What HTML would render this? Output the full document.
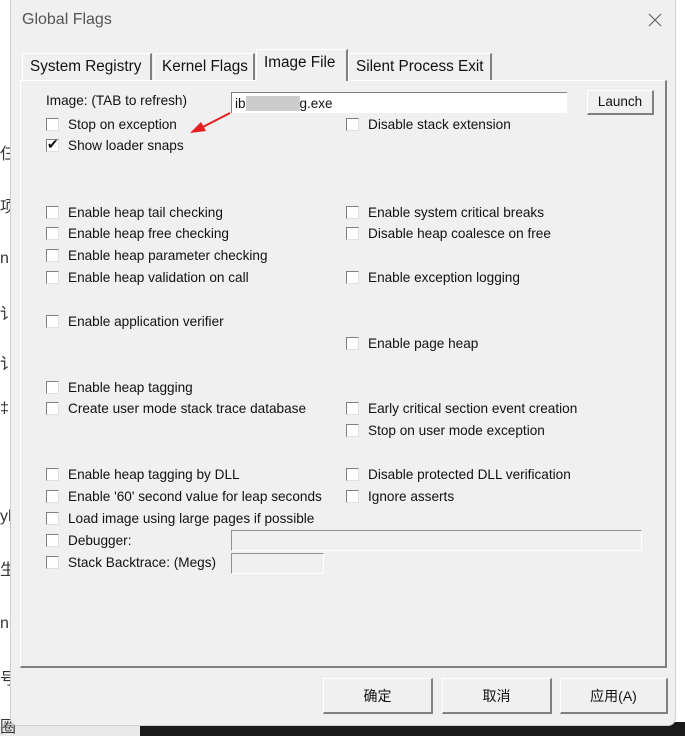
<!DOCTYPE html>
<html><head><meta charset="utf-8"><style>
*{box-sizing:border-box}
body{margin:0;width:685px;height:736px;position:relative;overflow:hidden;background:#fff;font-family:"Liberation Sans","Noto Sans CJK SC",sans-serif;font-size:13.5px;color:#111}
.a{position:absolute}
.dlg{left:10px;top:-8px;width:666px;height:734px;background:#f0f0f0;border:1px solid #d0d0d0;border-radius:8px}
.cb{position:absolute;width:13px;height:13px;background:#fff;border-top:1px solid #808080;border-left:1px solid #808080;border-right:1px solid #e0e0e0;border-bottom:1px solid #e0e0e0}
.l{position:absolute;white-space:nowrap;font-size:13.6px}
.tab{position:absolute;top:53px;height:27px;border:1px solid #fff;border-right:2px solid #808080;border-bottom:none;font-size:15.3px;padding:4px 0 0 7px;white-space:nowrap;background:#f0f0f0}
.btn{position:absolute;top:678px;height:36px;border:1px solid #fff;border-right:2px solid #808080;border-bottom:2px solid #808080;background:#f0f0f0;text-align:center;line-height:34px;font-size:14px}
</style></head><body>
<div class="a" style="left:0;top:726px;width:140px;height:10px;background:#e8e8e8"></div>
<div class="a" style="left:140px;top:722px;width:545px;height:14px;background:#1a1a1a"></div>
<div class="a" style="left:140px;top:0;width:200px;height:2px;background:#333"></div>
<div class="a" style="left:0;top:140px;font-size:16px;color:#333">仨</div>
<div class="a" style="left:0;top:193px;font-size:16px;color:#333">项</div>
<div class="a" style="left:0;top:250px;font-size:16px;color:#333">n</div>
<div class="a" style="left:0;top:300px;font-size:16px;color:#333">讠</div>
<div class="a" style="left:0;top:350px;font-size:16px;color:#333">讠</div>
<div class="a" style="left:0;top:400px;font-size:16px;color:#333">‡</div>
<div class="a" style="left:0;top:508px;font-size:16px;color:#333">yl</div>
<div class="a" style="left:0;top:556px;font-size:16px;color:#333">生</div>
<div class="a" style="left:0;top:615px;font-size:16px;color:#333">nu</div>
<div class="a" style="left:0;top:665px;font-size:16px;color:#333">号</div>
<div class="a" style="left:0;top:713px;font-size:16px;color:#333">圈</div>
<div class="dlg a"></div>
<div class="a" style="left:22px;top:11px;font-size:16px;color:#555">Global Flags</div>
<svg class="a" style="left:648px;top:13px" width="14" height="14"><path d="M1 1L13 13M13 1L1 13" stroke="#666" stroke-width="1.2"/></svg>
<div class="a" style="left:20px;top:80px;width:647px;height:588px;border:1px solid #fff;border-right:2px solid #808080;border-bottom:2px solid #808080"></div>
<div class="tab" style="left:22px;width:130px">System Registry</div>
<div class="tab" style="left:154px;width:101px">Kernel Flags</div>
<div class="tab" style="left:256px;top:49px;height:32px;width:92px;border-bottom:none;z-index:2">Image File</div>
<div class="tab" style="left:348px;width:144px">Silent Process Exit</div>
<div class="l" style="left:46px;top:93px">Image: (TAB to refresh)</div>
<div class="a" style="left:231px;top:92px;width:336px;height:21px;background:#fff;border-top:1px solid #808080;border-left:1px solid #808080;padding:3px 0 0 3px;font-size:13.5px">ib<span style="background:#ccc;color:#ccc">xxxxxxxx</span>g.exe</div>
<div class="a" style="left:587px;top:90px;width:67px;height:25px;border:1px solid #fff;border-right:2px solid #808080;border-bottom:2px solid #808080;text-align:center;line-height:22px">Launch</div>
<svg class="a" style="left:185px;top:110px" width="50" height="25"><path d="M45 3 L14 19" stroke="#e62020" stroke-width="2"/><path d="M5 23 L16 12 L21 21Z" fill="#e62020"/></svg>
<div class="cb" style="left:46px;top:118px"></div><div class="l" style="left:68px;top:117px">Stop on exception</div>
<div class="cb" style="left:46px;top:139px"></div><div class="l" style="left:43px;top:136px;font-size:14px">&nbsp;✔</div><div class="l" style="left:68px;top:138px">Show loader snaps</div>
<div class="cb" style="left:346px;top:118px"></div><div class="l" style="left:368px;top:117px">Disable stack extension</div>

<div class="cb" style="left:46px;top:206px"></div><div class="l" style="left:68px;top:205px">Enable heap tail checking</div>
<div class="cb" style="left:46px;top:227px"></div><div class="l" style="left:68px;top:226px">Enable heap free checking</div>
<div class="cb" style="left:46px;top:249px"></div><div class="l" style="left:68px;top:248px">Enable heap parameter checking</div>
<div class="cb" style="left:46px;top:271px"></div><div class="l" style="left:68px;top:270px">Enable heap validation on call</div>
<div class="cb" style="left:46px;top:315px"></div><div class="l" style="left:68px;top:314px">Enable application verifier</div>
<div class="cb" style="left:46px;top:381px"></div><div class="l" style="left:68px;top:380px">Enable heap tagging</div>
<div class="cb" style="left:46px;top:402px"></div><div class="l" style="left:68px;top:401px">Create user mode stack trace database</div>
<div class="cb" style="left:46px;top:468px"></div><div class="l" style="left:68px;top:467px">Enable heap tagging by DLL</div>
<div class="cb" style="left:46px;top:490px"></div><div class="l" style="left:68px;top:489px">Enable '60' second value for leap seconds</div>
<div class="cb" style="left:46px;top:512px"></div><div class="l" style="left:68px;top:511px">Load image using large pages if possible</div>
<div class="cb" style="left:46px;top:534px"></div><div class="l" style="left:68px;top:533px">Debugger:</div>
<div class="cb" style="left:46px;top:556px"></div><div class="l" style="left:68px;top:555px">Stack Backtrace: (Megs)</div>
<div class="a" style="left:231px;top:530px;width:411px;height:21px;border-top:1px solid #909090;border-left:1px solid #909090;border-right:1px solid #fff;border-bottom:1px solid #fff"></div>
<div class="a" style="left:231px;top:553px;width:93px;height:21px;border-top:1px solid #909090;border-left:1px solid #909090;border-right:1px solid #fff;border-bottom:1px solid #fff"></div>

<div class="cb" style="left:346px;top:206px"></div><div class="l" style="left:368px;top:205px">Enable system critical breaks</div>
<div class="cb" style="left:346px;top:227px"></div><div class="l" style="left:368px;top:226px">Disable heap coalesce on free</div>
<div class="cb" style="left:346px;top:271px"></div><div class="l" style="left:368px;top:270px">Enable exception logging</div>
<div class="cb" style="left:346px;top:337px"></div><div class="l" style="left:368px;top:336px">Enable page heap</div>
<div class="cb" style="left:346px;top:402px"></div><div class="l" style="left:368px;top:401px">Early critical section event creation</div>
<div class="cb" style="left:346px;top:424px"></div><div class="l" style="left:368px;top:423px">Stop on user mode exception</div>
<div class="cb" style="left:346px;top:468px"></div><div class="l" style="left:368px;top:467px">Disable protected DLL verification</div>
<div class="cb" style="left:346px;top:490px"></div><div class="l" style="left:368px;top:489px">Ignore asserts</div>

<div class="btn" style="left:323px;width:110px">确定</div>
<div class="btn" style="left:442px;width:110px">取消</div>
<div class="btn" style="left:560px;width:108px">应用(A)</div>
</body></html>
